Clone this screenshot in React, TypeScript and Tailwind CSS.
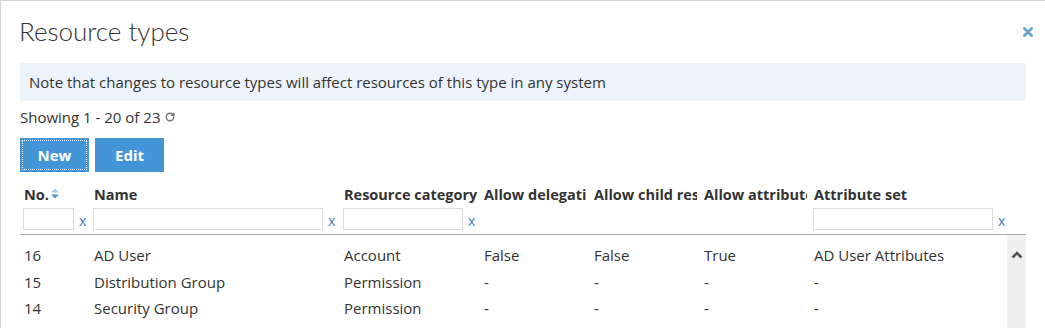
import React from 'react';
import { RotateCw } from 'lucide-react';

const columns = [
  { label: 'No.', width: 'w-[70px]', input: 'w-[51px]', sort: true },
  { label: 'Name', width: 'w-[250px]', input: 'w-[230px]' },
  { label: 'Resource category', width: 'w-[140px]', input: 'w-[120px]' },
  { label: 'Allow delegation', width: 'w-[110px]' },
  { label: 'Allow child resources', width: 'w-[110px]' },
  { label: 'Allow attributes', width: 'w-[110px]' },
  { label: 'Attribute set', width: 'w-[217px]', input: 'w-[180px]' },
];

const rows = [
  ['16', 'AD User', 'Account', 'False', 'False', 'True', 'AD User Attributes'],
  ['15', 'Distribution Group', 'Permission', '-', '-', '-', '-'],
  ['14', 'Security Group', 'Permission', '-', '-', '-', '-'],
];

const bodyWidths = ['w-[70px]', 'w-[250px]', 'w-[140px]', 'w-[110px]', 'w-[110px]', 'w-[110px]', 'w-[197px]'];

const SortIcon = () => (
  <svg width="8" height="11" viewBox="0 0 8 11" className="ml-[2px] mt-[-4px] shrink-0">
    <path d="M0 4.5 L4 0.5 L8 4.5 Z" fill="#a9c9e6" />
    <path d="M0 6.5 L4 10.5 L8 6.5 Z" fill="#4f92cf" />
  </svg>
);

const App = () => {
  return (
    <div className="w-[1045px] h-[328px] overflow-hidden bg-white border-t border-l border-[#d2d2d2] text-[#333] text-[15px]" style={{ fontFamily: '"Open Sans", sans-serif' }}>
      <div className="pl-[18px] pr-[19px]">
        {/* Title bar */}
        <div className="flex items-start justify-between h-[62px]">
          <h1 className="mt-[13px] text-[26px] leading-[34px] font-light text-[#333]" style={{ fontFamily: 'Lato, "Open Sans", sans-serif' }}>
            Resource types
          </h1>
          <svg width="10" height="10" viewBox="0 0 10 10" className="mt-[26px] mr-[-7px]">
            <path d="M1.5 1.5 L8.5 8.5 M8.5 1.5 L1.5 8.5" stroke="#6aa5da" strokeWidth="2.8" strokeLinecap="square" />
          </svg>
        </div>

        <div className="ml-[1px] bg-[#edf3fb] px-[9px] py-[9px] leading-[20px]">
          Note that changes to resource types will affect resources of this type in any system
        </div>

        <div className="ml-[1px] mt-[6px] flex items-center gap-[5px] leading-[20px]">
          <span>Showing 1 - 20 of 23</span>
          <RotateCw size={10} strokeWidth={3.5} className="text-[#777]" />
        </div>

        <div className="ml-[1px] mt-[11px] flex gap-[6px]">
          <button className="h-[34px] w-[69px] bg-[#4395d7] text-white font-bold outline-dotted outline-1 outline-white outline-offset-[-3px]">
            New
          </button>
          <button className="h-[34px] w-[69px] bg-[#4395d7] text-white font-bold">Edit</button>
        </div>

        {/* Header */}
        <div className="ml-[1px] mt-[12px] flex border-b border-[#aaa] pb-[4px]">
          {columns.map((c) => (
            <div key={c.label} className={`${c.width} shrink-0`}>
              <div className="pl-[4px] pr-[3px] flex items-center font-bold text-[14.5px] whitespace-nowrap leading-[22px] h-[22px]">
                <span className="overflow-hidden">{c.label}</span>
                {c.sort && <SortIcon />}
              </div>
              <div className="h-[22px] mt-[2px] flex items-center pl-[3px]">
                {c.input && (
                  <>
                    <input className={`${c.input} h-[22px] border border-[#ddd] bg-white outline-none`} />
                    <span className="ml-[5px] mt-[3px] text-[#3c7dbb] text-[14px]">x</span>
                  </>
                )}
              </div>
            </div>
          ))}
        </div>

        {/* Body */}
        <div className="ml-[1px] flex h-[100px]">
          <div className="flex-1 pt-[7px]">
            {rows.map((r) => (
              <div key={r[0]} className="flex h-[26.5px] items-center">
                {r.map((cell, i) => (
                  <div key={i} className={`${bodyWidths[i]} shrink-0 pl-[4px] whitespace-nowrap`}>
                    {cell}
                  </div>
                ))}
              </div>
            ))}
          </div>
          <div className="w-[20px] bg-[#f0f0f0] flex justify-center pt-[16px]">
            <svg width="12" height="8" viewBox="0 0 12 8">
              <path d="M1.5 6.5 L6 2 L10.5 6.5" stroke="#555" strokeWidth="2.6" fill="none" />
            </svg>
          </div>
        </div>
      </div>
    </div>
  );
};

export default App;
